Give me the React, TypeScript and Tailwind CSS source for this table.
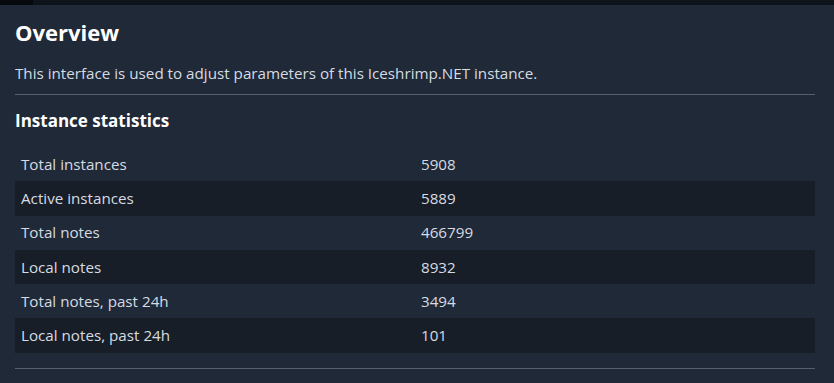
const stats: [string, string][] = [
  ["Total instances", "5908"],
  ["Active instances", "5889"],
  ["Total notes", "466799"],
  ["Local notes", "8932"],
  ["Total notes, past 24h", "3494"],
  ["Local notes, past 24h", "101"],
];

export default function App() {
  return (
    <div
      className="min-h-[383px] w-full bg-[#1f2937] text-[#d6dbe2]"
      style={{ fontFamily: '"Open Sans", "Noto Sans", sans-serif' }}
    >
      <div className="flex h-[5px]">
        <div className="w-[33px] bg-[#05090d]" />
        <div className="flex-1 bg-[#0d141b]" />
      </div>
      <div className="pl-[15px] pr-[19px]">
        <h1 className="mt-[12px] text-[22px] font-bold leading-[30px] text-white">Overview</h1>
        <p className="mt-[15px] text-[15.2px] leading-[22px]">
          This interface is used to adjust parameters of this Iceshrimp.NET instance.
        </p>
        <hr className="mt-[10px] border-t border-[#56606e]" />
        <h2 className="mt-[14px] text-[17px] font-bold leading-[24px] text-white">Instance statistics</h2>
        <table className="mt-[14px] w-full table-fixed border-collapse text-[15.2px]">
          <tbody>
            {stats.map(([label, value], i) => (
              <tr key={label} className={i % 2 === 1 ? "bg-[#181e27]" : ""}>
                <td className="h-[34.3px] px-[6px] py-0">{label}</td>
                <td className="h-[34.3px] px-[6px] py-0">{value}</td>
              </tr>
            ))}
          </tbody>
        </table>
        <hr className="mt-[15px] border-t border-[#56606e]" />
      </div>
    </div>
  );
}
